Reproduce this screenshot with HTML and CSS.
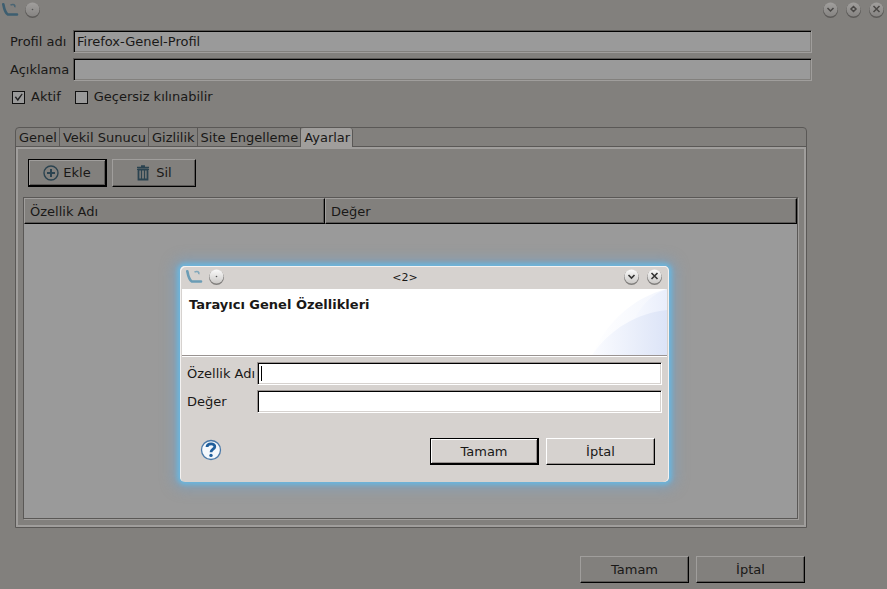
FILE: index.html
```html
<!DOCTYPE html>
<html lang="tr">
<head>
<meta charset="utf-8">
<title>Profil</title>
<link rel="stylesheet" href="styles.css">
</head>
<body>
<svg width="0" height="0" class="defs" aria-hidden="true">
  <defs>
    <linearGradient id="knob" x1="0" y1="0" x2="0" y2="1"><stop offset="0" stop-color="#fafafa"/><stop offset="1" stop-color="#cbc9c7"/></linearGradient>
    <linearGradient id="knobDim" x1="0" y1="0" x2="0" y2="1"><stop offset="0" stop-color="#a19f9d"/><stop offset="1" stop-color="#868482"/></linearGradient>
    <linearGradient id="arcA" x1="0" y1="0" x2="1" y2="0"><stop offset="0" stop-color="#fff"/><stop offset="1" stop-color="#f2f5fd"/></linearGradient>
    <linearGradient id="arcC" x1="0" y1="0" x2="1" y2="0"><stop offset="0" stop-color="#f8faff"/><stop offset="1" stop-color="#e9eefb"/></linearGradient>
    <linearGradient id="arcB" x1="0" y1="0" x2="1" y2="0"><stop offset="0" stop-color="#fbfcff"/><stop offset="1" stop-color="#dce4f7"/></linearGradient>
    <symbol id="logo" viewBox="0 0 18 16"><path d="M1.300 2.200C2.300 7.500 3.500 11 5.800 12.500H15" fill="none" stroke="currentColor" stroke-width="2.600" stroke-linecap="round" stroke-linejoin="round"/><path d="M8.500 3C11.500 1.700 13.300 3 12.800 5.200" fill="none" stroke="currentColor" stroke-width="1.600" opacity=".8"/></symbol>
  </defs>
</svg>

<main class="window">
  <header class="titlebar">
    <svg class="logo" width="18" height="16"><use href="#logo"/></svg>
    <button class="knob dim" aria-label="Menü"><svg width="17" height="18" viewBox="0 0 17 18"><circle cx="8.5" cy="9.5" r="7.5" fill="#5c5a58"/><circle cx="8.5" cy="8.5" r="7" fill="url(#knobDim)"/><circle cx="8.500" cy="8.500" r=".8" fill="#555"/></svg></button>
    <span class="spacer"></span>
    <span class="controls">
      <button class="knob dim" aria-label="Küçült"><svg width="17" height="18" viewBox="0 0 17 18"><circle cx="8.5" cy="9.5" r="7.5" fill="#5c5a58"/><circle cx="8.5" cy="8.5" r="7" fill="url(#knobDim)"/><path d="M5.500 7l3 3 3-3" fill="none" stroke="#4a4846" stroke-width="1.500"/></svg></button>
      <button class="knob dim" aria-label="Büyüt"><svg width="17" height="18" viewBox="0 0 17 18"><circle cx="8.5" cy="9.5" r="7.5" fill="#5c5a58"/><circle cx="8.5" cy="8.5" r="7" fill="url(#knobDim)"/><path d="M8.500 5.500l2.500 2.500-2.500 2.500L6 8z" fill="none" stroke="#4a4846" stroke-width="1.500"/></svg></button>
      <button class="knob dim" aria-label="Kapat"><svg width="17" height="18" viewBox="0 0 17 18"><circle cx="8.5" cy="9.5" r="7.5" fill="#5c5a58"/><circle cx="8.5" cy="8.5" r="7" fill="url(#knobDim)"/><path d="M5.500 5l6 6m0-6l-6 6" fill="none" stroke="#4a4846" stroke-width="1.500"/></svg></button>
    </span>
  </header>

  <div class="content">
    <form class="fields">
      <label for="name">Profil adı</label><input class="text" id="name" type="text" value="Firefox-Genel-Profil">
      <label for="desc">Açıklama</label><input class="text" id="desc" type="text">
    </form>
    <div class="checks">
      <label><input type="checkbox" checked>Aktif</label>
      <label><input type="checkbox">Geçersiz kılınabilir</label>
    </div>

    <section class="tabs">
      <nav class="tabstrip" role="tablist">
        <button class="tab" role="tab">Genel</button>
        <button class="tab" role="tab">Vekil Sunucu</button>
        <button class="tab" role="tab">Gizlilik</button>
        <button class="tab" role="tab">Site Engelleme</button>
        <button class="tab selected" role="tab" aria-selected="true">Ayarlar</button>
      </nav>
      <div class="pane">
        <div class="toolbar">
          <button class="btn default add"><svg width="16" height="16" viewBox="0 0 16 16" fill="none" stroke="#2b4350"><circle cx="8" cy="8" r="7" stroke-width="1.400"/><path d="M8 4v8M4 8h8" stroke-width="2"/></svg>Ekle</button>
          <button class="btn remove"><svg width="14" height="16" viewBox="0 0 14 16" fill="none" stroke="#2b4350"><path d="M1 2.500h12M5 1h4" stroke-width="1.500"/><path d="M2.500 4.500h9v10h-9z" stroke-width="1.800"/><path d="M5.500 5v9M8.500 5v9" stroke-width="1.300"/><path d="M1 4.500h12" stroke-width="1"/></svg>Sil</button>
        </div>
        <div class="tableframe">
          <table class="grid">
            <thead><tr><th class="first">Özellik Adı</th><th>Değer</th></tr></thead>
            <tbody></tbody>
          </table>
        </div>
      </div>
    </section>

    <footer class="actions">
      <button class="btn wide">Tamam</button>
      <button class="btn wide">İptal</button>
    </footer>
  </div>
</main>

<section class="dialog" role="dialog" aria-labelledby="heading">
  <header class="dialogbar">
    <svg class="logo" width="18" height="16"><use href="#logo"/></svg>
    <button class="knob" aria-label="Menü"><svg width="17" height="18" viewBox="0 0 17 18"><circle cx="8.5" cy="9.5" r="7.5" fill="#807e7c"/><circle cx="8.5" cy="8.5" r="7" fill="url(#knob)"/><circle cx="8.500" cy="8.500" r=".8" fill="#555"/></svg></button>
    <span class="caption">&lt;2&gt;</span>
    <span class="controls">
      <button class="knob" aria-label="Küçült"><svg width="17" height="18" viewBox="0 0 17 18"><circle cx="8.5" cy="9.5" r="7.5" fill="#807e7c"/><circle cx="8.5" cy="8.5" r="7" fill="url(#knob)"/><path d="M5.500 7l3 3 3-3" fill="none" stroke="#333" stroke-width="1.600"/></svg></button>
      <button class="knob" aria-label="Kapat"><svg width="17" height="18" viewBox="0 0 17 18"><circle cx="8.5" cy="9.5" r="7.5" fill="#807e7c"/><circle cx="8.5" cy="8.5" r="7" fill="url(#knob)"/><path d="M5.500 5l6 6m0-6l-6 6" fill="none" stroke="#333" stroke-width="1.600"/></svg></button>
    </span>
  </header>
  <div class="banner">
    <h1 id="heading">Tarayıcı Genel Özellikleri</h1>
    <svg width="75" height="66" viewBox="0 0 75 66" aria-hidden="true"><path d="M0 66C14 34 40 9 75 0V66z" fill="url(#arcA)"/><path d="M38 40C47 18 58 6 75 0V40z" fill="url(#arcC)"/><path d="M0 66C18 40 45 24 75 21V66z" fill="url(#arcB)"/></svg>
  </div>
  <form class="fields light">
    <label for="prop">Özellik Adı</label><input class="text" id="prop" type="text" autofocus>
    <label for="val">Değer</label><input class="text" id="val" type="text">
  </form>
  <footer class="dialogfoot">
    <button class="help" aria-label="Yardım"><svg width="22" height="22" viewBox="0 0 22 22"><circle cx="11" cy="11" r="9.500" fill="#f4f8fc" stroke="#4a79a8" stroke-width="1.300"/><path d="M7 8C7.200 3.800 15.200 3.800 14.800 7.800C14.500 10.200 11 10.200 11 13.300" fill="none" stroke="#205f9c" stroke-width="2.800"/><circle cx="11" cy="16.400" r="1.700" fill="#205f9c"/></svg></button>
    <span class="spacer"></span>
    <button class="btn default wide">Tamam</button>
    <button class="btn wide">İptal</button>
  </footer>
</section>
</body>
</html>
```

FILE: styles.css
```css
:root {
  --face: #82807d;
  --hi: #a09e9c;
  --lo: #5a5856;
  --field: #9a9a9a;
}
* { box-sizing: border-box; }
body {
  margin: 0;
  position: relative;
  background: var(--face);
  color: #191817;
  font: 13px/16px "DejaVu Sans", sans-serif;
}
button, input { font: inherit; color: inherit; }
.defs { position: absolute; }
.window { min-height: 100vh; display: flex; flex-direction: column; }
.spacer { flex: 1; }

.titlebar, .dialogbar { display: flex; align-items: center; gap: 4px; }
.titlebar { height: 20px; padding: 0 2px; color: #3d5e70; }
.logo { display: block; }
.knob { display: block; width: 17px; height: 18px; padding: 0; border: 0; background: none; }
.knob svg { display: block; }
.controls { display: flex; gap: 6px; }

.content { flex: 1; display: flex; flex-direction: column; padding: 10px 75px 6px 10px; }
.fields {
  display: grid;
  grid-template-columns: 58px 1fr;
  gap: 5px;
  align-items: center;
  white-space: nowrap;
}
.text {
  width: 100%;
  min-width: 0;
  height: 23px;
  padding: 0 3px;
  border: 1px solid;
  border-color: var(--lo) var(--hi) var(--hi) var(--lo);
  border-radius: 0;
  outline: 0;
  background: var(--field);
  box-shadow: inset 1px 1px #000, inset -1px -1px var(--face);
}
/* steady insertion bar in the empty, focused field */
.text[autofocus] {
  caret-color: transparent;
  background: linear-gradient(#000, #000) 3px 3px / 1px 15px no-repeat var(--field);
}
.checks { display: flex; gap: 14px; margin: 8px 2px 0; }
.checks label { display: flex; align-items: center; gap: 6px; }
.checks input {
  appearance: none;
  width: 13px;
  height: 13px;
  margin: 0;
  border: 1px solid #111;
  background: var(--field);
}
.checks input:checked::before {
  content: "";
  display: block;
  width: 11px;
  height: 11px;
  background: #222;
  clip-path: polygon(15% 50%, 28% 46%, 42% 66%, 80% 18%, 88% 24%, 44% 88%);
}

.tabs {
  flex: 1;
  display: flex;
  flex-direction: column;
  margin: 22px 5px 28px;
  border: 1px solid var(--lo);
  border-radius: 4px 4px 0 0;
}
.tabstrip { display: flex; height: 19px; border-bottom: 1px solid var(--lo); }
.tab {
  height: 18px;
  padding: 1px 2px 0 3px;
  border: 0;
  border-right: 1px solid var(--lo);
  background: none;
  line-height: 18px;
}
.tab.selected { height: 19px; background: var(--hi); border-radius: 3px 3px 0 0; }
.pane {
  flex: 1;
  display: flex;
  flex-direction: column;
  gap: 10px;
  padding: 10px 6px 6px 5px;
  border: 2px solid var(--hi);
}
.toolbar { display: flex; gap: 5px; padding-left: 5px; }

.btn {
  display: flex;
  align-items: center;
  justify-content: center;
  height: 28px;
  padding: 0;
  border: 1px solid;
  border-color: var(--hi) #000 #000 var(--hi);
  background: var(--face);
  box-shadow: inset -1px -1px var(--lo);
}
.btn.default {
  padding-top: 1px;
  border: 1px solid #000;
  border-width: 1px 2px 2px 1px;
  box-shadow: inset 1px 1px var(--hi), inset -1px -1px var(--lo);
}
.add { width: 79px; gap: 4px; }
.remove { width: 84px; gap: 6px; }
.wide { width: 109px; height: 27px; }

.tableframe {
  flex: 1;
  border: 1px solid var(--lo);
  background: var(--field);
  box-shadow: 1px 1px var(--hi);
}
.grid { width: 100%; border-collapse: separate; border-spacing: 0; table-layout: fixed; }
.grid th {
  height: 26px;
  padding: 2px 5px 0;
  border: 1px solid;
  border-color: var(--hi) #000 #000 var(--hi);
  background: var(--face);
  box-shadow: inset -1px -1px var(--lo);
  font-weight: normal;
  text-align: left;
}
.grid th.first { width: 301px; }
.actions { display: flex; justify-content: flex-end; gap: 7px; padding-right: 7px; }

.dialog {
  --face: #d6d2cf;
  --hi: #fff;
  --lo: #999391;
  --field: #fff;
  position: absolute;
  top: 266px;
  left: 180px;
  right: 218px;
  padding: 0 2px 17px;
  border-radius: 5px;
  background: var(--face);
  box-shadow: inset 1px 1px #f4f2f1, inset -1px 0 #f4f2f1, 0 0 4px 3px #6bb5dc, 0 0 12px 8px rgba(125, 160, 190, .6);
}
.dialogbar { height: 23px; padding: 0 4px 2px; color: #6b9cb5; }
.caption { flex: 1; padding: 2px 38px 0 0; color: #191817; font-size: 11px; text-align: center; }
.banner {
  display: flex;
  justify-content: space-between;
  height: 67px;
  border-bottom: 1px solid var(--lo);
  background: #fff;
  box-shadow: 0 1px #fff;
}
.banner h1 { margin: 8px 7px; font-size: 13px; line-height: 16px; }
.banner svg { display: block; }
.fields.light { grid-template-columns: 65px 1fr; margin: 6px 5px 0; }
.dialogfoot { display: flex; align-items: center; gap: 7px; margin: 25px 12px 0 18px; }
.help { padding: 0 0 3px; border: 0; background: none; }
.help svg { display: block; }
```
